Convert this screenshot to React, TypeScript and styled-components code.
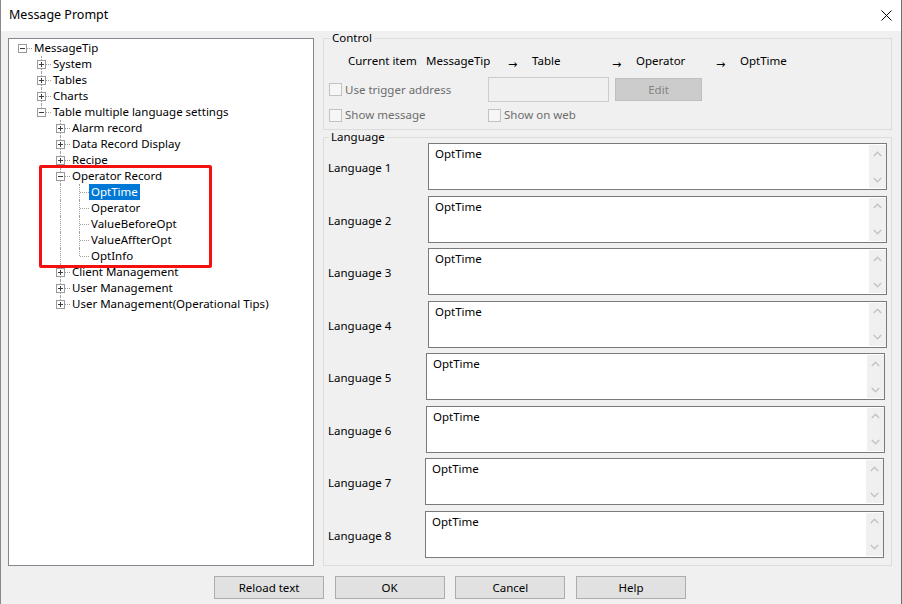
import React from 'react';
import styled, { createGlobalStyle, css } from 'styled-components';

const GlobalStyle = createGlobalStyle`
  html, body { margin: 0; padding: 0; background: #f0f0f0; }
  body {
    font-family: "Noto Sans", "Liberation Sans", sans-serif;
    font-size: 11.5px;
    color: #000;
  }
  * { box-sizing: border-box; }
`;

const Window = styled.div`
  width: 902px;
  height: 604px;
  display: flex;
  flex-direction: column;
  background: #f0f0f0;
  border-left: 1px solid #8a8a8a;
  border-right: 1px solid #6e6e6e;
  overflow: hidden;
`;

const TitleBar = styled.div`
  height: 31px;
  flex-shrink: 0;
  background: #ffffff;
  display: flex;
  align-items: center;
  justify-content: space-between;
  padding: 0 9px 1px 8px;
`;

const TitleText = styled.span`
  font-size: 12.5px;
  line-height: 16px;
`;

const CloseGlyph = styled.svg`
  display: block;
`;

const Body = styled.div`
  flex: 1;
  display: flex;
  flex-direction: column;
  padding: 0 9px 5px 7px;
  min-height: 0;
`;

const Main = styled.div`
  flex: 1;
  display: flex;
  gap: 9px;
  min-height: 0;
`;

const TreePanel = styled.div`
  position: relative;
  width: 306px;
  flex-shrink: 0;
  margin-top: 7px;
  background: #ffffff;
  border: 1px solid #828790;
  padding-top: 1px;
  overflow: hidden;
`;

const TreeRow = styled.div`
  display: flex;
  height: 16px;
  padding-left: 4px;
`;

const dotted = '1px dotted #a0a0a0';

const Guide = styled.div<{ $line: boolean }>`
  position: relative;
  width: 19px;
  height: 16px;
  flex-shrink: 0;
  ${(p) =>
    p.$line &&
    css`
      &::before {
        content: '';
        position: absolute;
        left: 9px;
        top: 0;
        height: 16px;
        border-left: ${dotted};
      }
    `}
`;

const Connector = styled.div<{ $last: boolean; $root: boolean }>`
  position: relative;
  width: 19px;
  height: 16px;
  flex-shrink: 0;
  &::before {
    content: '';
    display: ${(p) => (p.$root ? 'none' : 'block')};
    position: absolute;
    left: 9px;
    top: 0;
    height: ${(p) => (p.$last ? '8px' : '16px')};
    border-left: ${dotted};
  }
  &::after {
    content: '';
    position: absolute;
    left: 10px;
    top: 8px;
    width: 9px;
    border-top: ${dotted};
  }
`;

const Expander = styled.span<{ $open: boolean }>`
  position: absolute;
  z-index: 1;
  left: 5px;
  top: 4px;
  width: 9px;
  height: 9px;
  background: #ffffff;
  border: 1px solid #9a9a9a;
  &::before {
    content: '';
    position: absolute;
    left: 1px;
    top: 3px;
    width: 5px;
    height: 1px;
    background: #3c3c3c;
  }
  &::after {
    content: '';
    display: ${(p) => (p.$open ? 'none' : 'block')};
    position: absolute;
    left: 3px;
    top: 1px;
    width: 1px;
    height: 5px;
    background: #3c3c3c;
  }
`;

const NodeLabel = styled.span<{ $selected?: boolean }>`
  display: block;
  height: 16px;
  line-height: 16px;
  padding: 0 2px;
  white-space: nowrap;
  background: ${(p) => (p.$selected ? '#0078d7' : 'transparent')};
  color: ${(p) => (p.$selected ? '#ffffff' : '#000000')};
`;

const Annotation = styled.div`
  position: absolute;
  left: 30px;
  top: 126px;
  width: 173px;
  height: 103px;
  border: 3px solid #f51010;
  border-radius: 2px;
  pointer-events: none;
`;

const RightColumn = styled.div`
  flex: 1;
  display: flex;
  flex-direction: column;
  min-width: 0;
`;

const Group = styled.fieldset<{ $grow?: boolean; $inset: number }>`
  margin: 0;
  min-width: 0;
  border: 1px solid #dcdcdc;
  padding: 0 4px 7px ${(p) => p.$inset}px;
  ${(p) => p.$grow && 'flex: 1;'}
`;

const GroupTitle = styled.legend`
  padding: 0 2px;
  margin-left: 1px;
  line-height: 14px;
`;

const CurrentRow = styled.div`
  display: flex;
  align-items: center;
  height: 16px;
  margin-top: 8px;
  padding-left: 19px;
  white-space: nowrap;
`;

const PathCell = styled.span<{ $w: number }>`
  width: ${(p) => p.$w}px;
  flex-shrink: 0;
  line-height: 16px;
`;

const PathSegment = styled.span`
  display: flex;
  width: 104px;
  flex-shrink: 0;
  height: 16px;
  line-height: 16px;
`;

const Arrow = styled.span`
  width: 24px;
  flex-shrink: 0;
  font-family: "DejaVu Sans", sans-serif;
  font-size: 11px;
  line-height: 10px;
  padding-top: 7px;
`;

const OptionRow = styled.div<{ $h: number; $gap: number }>`
  display: flex;
  align-items: center;
  height: ${(p) => p.$h}px;
  margin-top: ${(p) => p.$gap}px;
`;

const CheckOption = styled.label<{ $w?: number }>`
  display: flex;
  align-items: center;
  ${(p) => (p.$w ? `width: ${p.$w}px;` : '')}
  flex-shrink: 0;
  color: #6d6d6d;
  line-height: 14px;
  white-space: nowrap;
`;

const CheckBox = styled.span`
  width: 13px;
  height: 13px;
  flex-shrink: 0;
  border: 1px solid #c2c2c2;
  background: #f6f6f6;
  margin-right: 3px;
`;

const AddressBox = styled.div`
  width: 121px;
  height: 25px;
  flex-shrink: 0;
  border: 1px solid #cccccc;
  background: #f0f0f0;
`;

const EditButton = styled.div`
  width: 87px;
  height: 23px;
  margin-left: 6px;
  flex-shrink: 0;
  display: flex;
  align-items: center;
  justify-content: center;
  background: #cccccc;
  border: 1px solid #bfbfbf;
  color: #838383;
`;

const LangList = styled.div`
  display: grid;
  grid-auto-rows: 47px;
  row-gap: 5.57px;
  margin-top: -1px;
`;

const LangRow = styled.div`
  display: flex;
  align-items: center;
`;

const LangLabel = styled.span`
  width: 100px;
  flex-shrink: 0;
  line-height: 16px;
  padding-top: 3px;
  white-space: nowrap;
`;

const TextBox = styled.div<{ $shift: number }>`
  width: 459px;
  height: 47px;
  margin-left: ${(p) => p.$shift}px;
  flex-shrink: 0;
  display: flex;
  background: #ffffff;
  border: 1px solid #7a7a7a;
`;

const TextContent = styled.div`
  flex: 1;
  padding: 2px 6px 0;
  line-height: 16px;
`;

const ScrollTrack = styled.div`
  width: 17px;
  margin: 1px 0 1px 0;
  background: #f0f0f0;
  display: flex;
  flex-direction: column;
  justify-content: space-between;
`;

const ScrollArrow = styled.div`
  height: 17px;
  display: flex;
  align-items: center;
  justify-content: center;
`;

const ButtonRow = styled.div`
  display: flex;
  justify-content: center;
  gap: 10.67px;
  margin-top: 10px;
  flex-shrink: 0;
`;

const DialogButton = styled.button`
  width: 110px;
  height: 23px;
  padding: 0;
  background: #e1e1e1;
  border: 1px solid #adadad;
  border-radius: 0;
  font-family: "Noto Sans", "Liberation Sans", sans-serif;
  font-size: 11.5px;
  color: #000;
`;

type TreeNode = {
  label: string;
  state?: 'open' | 'closed';
  selected?: boolean;
  children?: TreeNode[];
};

const tree: TreeNode[] = [
  {
    label: 'MessageTip',
    state: 'open',
    children: [
      { label: 'System', state: 'closed' },
      { label: 'Tables', state: 'closed' },
      { label: 'Charts', state: 'closed' },
      {
        label: 'Table multiple language settings',
        state: 'open',
        children: [
          { label: 'Alarm record', state: 'closed' },
          { label: 'Data Record Display', state: 'closed' },
          { label: 'Recipe', state: 'closed' },
          {
            label: 'Operator Record',
            state: 'open',
            children: [
              { label: 'OptTime', selected: true },
              { label: 'Operator' },
              { label: 'ValueBeforeOpt' },
              { label: 'ValueAffterOpt' },
              { label: 'OptInfo' },
            ],
          },
          { label: 'Client Management', state: 'closed' },
          { label: 'User Management', state: 'closed' },
          { label: 'User Management(Operational Tips)', state: 'closed' },
        ],
      },
    ],
  },
];

type FlatRow = { node: TreeNode; guides: boolean[]; last: boolean; root: boolean };

function flatten(nodes: TreeNode[], depth = 0, guides: boolean[] = []): FlatRow[] {
  const out: FlatRow[] = [];
  nodes.forEach((node, i) => {
    const last = i === nodes.length - 1;
    out.push({ node, guides, last, root: depth === 0 });
    if (node.state === 'open' && node.children) {
      out.push(...flatten(node.children, depth + 1, depth === 0 ? [false] : [...guides, !last]));
    }
  });
  return out;
}

const rows = flatten(tree);

const languages = [0, 0, 0, 0, -2, -2, -3, -3];

const Chevron = ({ up }: { up?: boolean }) => (
  <svg width="9" height="6" viewBox="0 0 9 6">
    <polyline
      points={up ? '0.8,5 4.5,1.2 8.2,5' : '0.8,1 4.5,4.8 8.2,1'}
      fill="none"
      stroke="#c3c3c3"
      strokeWidth="1.4"
    />
  </svg>
);

export default function App() {
  return (
    <>
      <GlobalStyle />
      <Window>
        <TitleBar>
          <TitleText>Message Prompt</TitleText>
          <CloseGlyph width="11" height="11" viewBox="0 0 11 11">
            <path d="M0.5 0.5 L10.5 10.5 M10.5 0.5 L0.5 10.5" stroke="#000" strokeWidth="1" />
          </CloseGlyph>
        </TitleBar>
        <Body>
          <Main>
            <TreePanel>
              {rows.map((r, i) => (
                <TreeRow key={i}>
                  {r.guides.map((g, j) => (
                    <Guide key={j} $line={g} />
                  ))}
                  <Connector $last={r.last} $root={r.root}>
                    {r.node.state && <Expander $open={r.node.state === 'open'} />}
                  </Connector>
                  <NodeLabel $selected={r.node.selected}>{r.node.label}</NodeLabel>
                </TreeRow>
              ))}
              <Annotation />
            </TreePanel>
            <RightColumn>
              <Group $inset={5}>
                <GroupTitle>Control</GroupTitle>
                <CurrentRow>
                  <PathCell $w={78}>Current item</PathCell>
                  <PathCell $w={82}>MessageTip</PathCell>
                  <PathSegment>
                    <Arrow>→</Arrow>
                    <span>Table</span>
                  </PathSegment>
                  <PathSegment>
                    <Arrow>→</Arrow>
                    <span>Operator</span>
                  </PathSegment>
                  <PathSegment>
                    <Arrow>→</Arrow>
                    <span>OptTime</span>
                  </PathSegment>
                </CurrentRow>
                <OptionRow $h={25} $gap={8}>
                  <CheckOption $w={159}>
                    <CheckBox />
                    Use trigger address
                  </CheckOption>
                  <AddressBox />
                  <EditButton>Edit</EditButton>
                </OptionRow>
                <OptionRow $h={14} $gap={6}>
                  <CheckOption $w={159}>
                    <CheckBox />
                    Show message
                  </CheckOption>
                  <CheckOption>
                    <CheckBox />
                    Show on web
                  </CheckOption>
                </OptionRow>
              </Group>
              <Group $inset={4} $grow>
                <GroupTitle>Language</GroupTitle>
                <LangList>
                  {languages.map((shift, i) => (
                    <LangRow key={i}>
                      <LangLabel>Language {i + 1}</LangLabel>
                      <TextBox $shift={shift}>
                        <TextContent>OptTime</TextContent>
                        <ScrollTrack>
                          <ScrollArrow>
                            <Chevron up />
                          </ScrollArrow>
                          <ScrollArrow>
                            <Chevron />
                          </ScrollArrow>
                        </ScrollTrack>
                      </TextBox>
                    </LangRow>
                  ))}
                </LangList>
              </Group>
            </RightColumn>
          </Main>
          <ButtonRow>
            <DialogButton>Reload text</DialogButton>
            <DialogButton>OK</DialogButton>
            <DialogButton>Cancel</DialogButton>
            <DialogButton>Help</DialogButton>
          </ButtonRow>
        </Body>
      </Window>
    </>
  );
}
